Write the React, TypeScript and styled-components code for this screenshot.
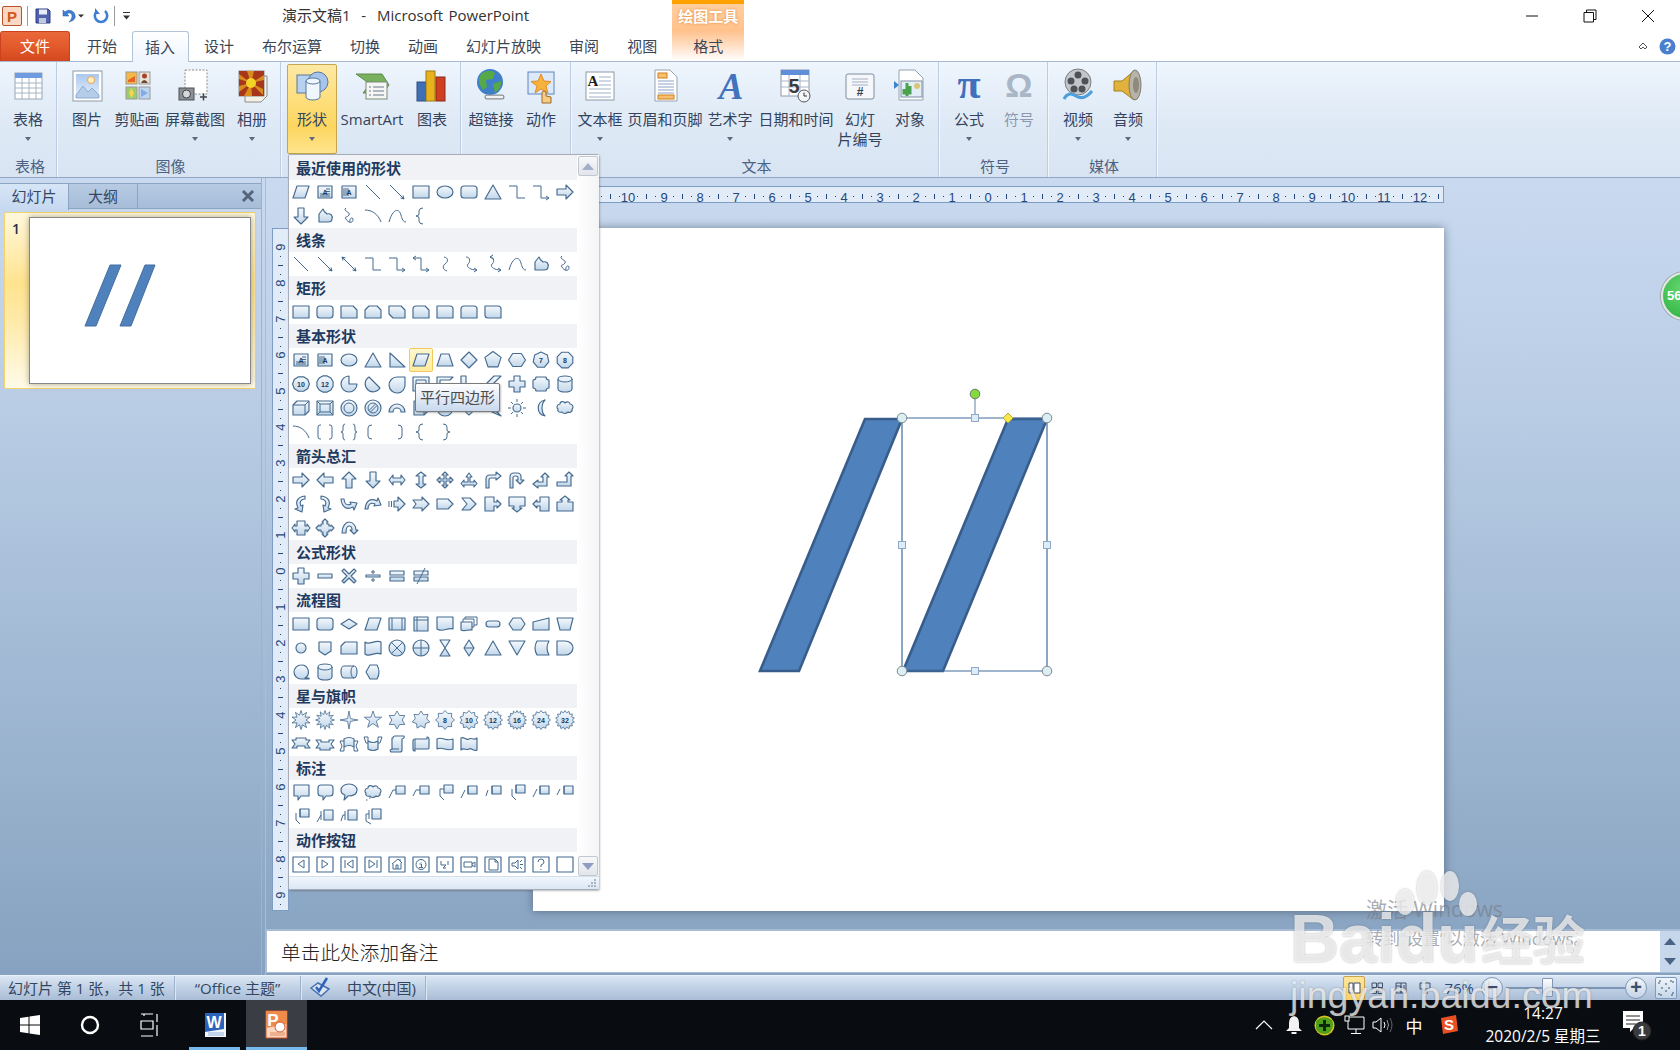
import React from 'react';
import styled, { createGlobalStyle } from 'styled-components';

const CJK = '"Open Sans", "Noto Sans CJK SC", "Liberation Sans", sans-serif';

const GlobalStyle = createGlobalStyle`
  html, body {
    margin: 0;
    padding: 0;
    overflow: hidden;
    background: #fff;
    font-family: ${CJK};
  }
  * { box-sizing: border-box; }
`;

const Screen = styled.div`
  position: relative;
  width: 1680px;
  height: 1050px;
  display: flex;
  flex-direction: column;
  overflow: hidden;
`;

/* ---------- title bar ---------- */

const TitleBar = styled.div`
  height: 31px;
  display: flex;
  align-items: center;
  background: #fff;
`;

const QuickAccess = styled.div`
  display: flex;
  align-items: center;
  width: 282px;
  padding-left: 2px;
`;

const QuickSep = styled.div`
  width: 1px;
  height: 20px;
  background: #9a9a9a;
  margin: 0 7px 0 5px;
`;

const QuickGap = styled.span<{ $w: number }>`
  width: ${p => p.$w}px;
`;

const Title = styled.div`
  font-size: 15px;
  line-height: 20px;
  margin-top: -1px;
  color: #333;
  white-space: pre;
  word-spacing: 1.5px;
  flex: 1;
`;

const WinButton = styled.div`
  width: 58px;
  display: flex;
  justify-content: center;
`;

const WinControls = styled.div`
  display: flex;
  margin-right: 3px;
`;

/* ---------- tabs ---------- */

const TabRow = styled.div`
  height: 30px;
  display: flex;
  align-items: stretch;
  background: #fff;
  position: relative;
`;

const FileTab = styled.div`
  width: 70px;
  margin-right: 3px;
  border: 1px solid #c9431c;
  border-bottom: 0;
  border-radius: 3px 3px 0 0;
  background: linear-gradient(#e9683a, #e35a2b 50%, #d3481f);
  color: #fff;
  font-size: 15px;
  padding-bottom: 2px;
  display: flex;
  align-items: center;
  justify-content: center;
`;

const Tab = styled.div<{ $active?: boolean }>`
  padding: 0 14px 2px;
  font-size: 15px;
  color: #3a4656;
  display: flex;
  align-items: center;
  position: relative;
  z-index: 1;
  ${p => p.$active && `
    border: 1px solid #b4c4d8;
    border-bottom: 0;
    border-radius: 3px 3px 0 0;
    margin: 0 1px;
    padding: 0 13px 2px 12px;
    margin-bottom: -1px;
    background: linear-gradient(#fff, #edf4fd);
  `}
`;

const ContextTab = styled(Tab)`
  position: relative;
  width: 72px;
  margin-left: 1px;
  justify-content: center;
  background: linear-gradient(#ffc28e, #ffdcc0 45%, #fff);
`;

const ContextHeader = styled.div`
  position: absolute;
  left: 0;
  right: 0;
  top: -31px;
  height: 31px;
  border-top: 4px solid #ffa200;
  background: linear-gradient(#ffcf9d, #ffc18c);
  color: #fff;
  font-size: 15px;
  font-weight: 600;
  text-align: center;
  line-height: 25px;
  text-shadow: 0 0 3px #e08a3c;
`;

const HelpArea = styled.div`
  margin-left: auto;
  display: flex;
  align-items: center;
  gap: 11px;
  padding-right: 4px;
`;

/* ---------- ribbon ---------- */

const Ribbon = styled.div`
  height: 117px;
  display: flex;
  border-top: 1px solid #a7b8cf;
  border-bottom: 1px solid #8fa6c4;
  background: linear-gradient(#eef5fd, #dfeaf6 50%, #d8e4f2);
`;

const Group = styled.div<{ $w: number; $pad: number }>`
  width: ${p => p.$w}px;
  padding-left: ${p => p.$pad}px;
  border-right: 1px solid #bccde2;
  box-shadow: 1px 0 0 #f2f7fc;
  display: flex;
  flex-direction: column;
`;

const GroupButtons = styled.div`
  height: 93px;
  padding-top: 2px;
  display: flex;
`;

const GroupLabel = styled.div<{ $pad: number }>`
  height: 22px;
  line-height: 22px;
  margin-left: -${p => p.$pad}px;
  padding-left: 4px;
  text-align: center;
  font-size: 15px;
  color: #4c6283;
`;

const RibbonButton = styled.div<{ $w: number; $active?: boolean; $disabled?: boolean }>`
  width: ${p => p.$w}px;
  height: 90px;
  display: flex;
  flex-direction: column;
  align-items: center;
  padding-top: 5px;
  font-size: 15px;
  color: ${p => (p.$disabled ? '#8b99ad' : '#33435c')};
  border-radius: 2px;
  ${p => p.$active && `
    border: 1px solid #c5a54f;
    padding-top: 4px;
    background: linear-gradient(#fde9a4, #fedd78 45%, #fdd65f 70%, #fee48d);
  `}
`;

const RibbonIcon = styled.div`
  width: 32px;
  height: 34px;
  flex: none;
  svg { overflow: visible; }
`;

const RibbonText = styled.div`
  margin-top: 6px;
  line-height: 20px;
  text-align: center;
  white-space: pre;
`;

const Caret = styled.div`
  width: 0;
  height: 0;
  margin-top: 8px;
  border-left: 3.5px solid transparent;
  border-right: 3.5px solid transparent;
  border-top: 4px solid #5e6a7c;
`;

/* ---------- workspace ---------- */

const Workspace = styled.div`
  flex: 1;
  display: flex;
  background: linear-gradient(#c9daf0, #b8cce4 30%, #86a2c0);
  min-height: 0;
`;

const LeftPane = styled.div`
  width: 262px;
  padding-top: 5px;
  border-right: 1px solid #9db2cd;
`;

const PaneTabs = styled.div`
  height: 26px;
  display: flex;
  background: linear-gradient(#b7cbe3, #a6bcd8);
  border-top: 1px solid #8ca5c4;
  border-bottom: 1px solid #8ca5c4;
  position: relative;
`;

const PaneTab = styled.div<{ $active?: boolean }>`
  width: 69px;
  text-align: center;
  line-height: 24px;
  font-size: 15px;
  color: #354763;
  border-right: 1px solid #8ca5c4;
  ${p => p.$active && `
    background: linear-gradient(#d6e5f6, #c6d9f0);
    height: 26px;
  `}
`;

const PaneClose = styled.div`
  position: absolute;
  right: 6px;
  top: 5px;
  display: flex;
`;

const SlideItem = styled.div`
  margin: 3px 0 0 4px;
  width: 252px;
  height: 177px;
  border: 1px solid #f4d36e;
  border-radius: 2px;
  background: linear-gradient(#fff8dc, #ffe38f 40%, #ffe9a6 60%, #fffbe9);
  display: flex;
  padding: 4px 0 0 24px;
  position: relative;
`;

const SlideNumber = styled.div`
  position: absolute;
  left: 7px;
  top: 6px;
  font-size: 14px;
  font-weight: 600;
  color: #20324e;
`;

const Thumb = styled.div`
  width: 222px;
  height: 167px;
  background: #fff;
  border: 1px solid #85888d;
  box-shadow: 0 0 6px rgba(90, 90, 60, 0.5);
`;

const Sash = styled.div`
  width: 4px;
  border-right: 1px solid #a9bdd6;
`;

const RightColumn = styled.div`
  flex: 1;
  display: flex;
  flex-direction: column;
  min-width: 0;
`;

const Stage = styled.div`
  height: 753px;
  display: grid;
  grid-template-columns: 17px 1fr;
  grid-template-rows: 17px 1fr;
  padding: 8px 0 0 6px;
  row-gap: 25px;
`;

const RulerCorner = styled.div``;

const HRuler = styled.div`
  width: 911px;
  height: 17px;
  margin-left: 244px;
  background: #e1ecf8;
  border: 1px solid #7f9cc2;
`;

const VRuler = styled.div`
  width: 17px;
  height: 683px;
  background: #e1ecf8;
  border: 1px solid #7f9cc2;
`;

const Slide = styled.div`
  width: 911px;
  height: 683px;
  margin-left: 244px;
  background: #fff;
  box-shadow: 0 0 9px rgba(50, 60, 80, 0.55);
`;

const Notes = styled.div`
  height: 44px;
  margin-bottom: 2px;
  border-top: 2px solid #a9bcd6;
  border-bottom: 1px solid #a9bcd6;
  border-left: 1px solid #a9bcd6;
  background: #fff;
  display: flex;
  align-items: center;
  justify-content: space-between;
`;

const NotesText = styled.div`
  font-size: 19.6px;
  font-weight: 300;
  color: #222;
  padding-left: 14px;
  letter-spacing: 0.1px;
`;

const NotesScroll = styled.div`
  width: 20px;
  height: 100%;
  background: #c6d7ec;
  display: flex;
  flex-direction: column;
  justify-content: space-around;
  align-items: center;
`;

const ArrowUp = styled.div<{ $c?: string }>`
  width: 0;
  height: 0;
  border-left: 6px solid transparent;
  border-right: 6px solid transparent;
  border-bottom: 7px solid ${p => p.$c || '#4a6284'};
`;

const ArrowDown = styled.div<{ $c?: string }>`
  width: 0;
  height: 0;
  border-left: 6px solid transparent;
  border-right: 6px solid transparent;
  border-top: 7px solid ${p => p.$c || '#4a6284'};
`;

/* ---------- status bar ---------- */

const StatusBar = styled.div`
  height: 25px;
  display: flex;
  align-items: stretch;
  background: linear-gradient(#dbe6f3, #c5d5e8 40%, #a9bdd6);
  border-top: 1px solid #e9f0f8;
  font-size: 15px;
  color: #34465f;
`;

const StatusItem = styled.div<{ $w: number; $center?: boolean }>`
  width: ${p => p.$w}px;
  display: flex;
  align-items: center;
  white-space: pre;
  padding-bottom: 2px;
  justify-content: ${p => (p.$center ? 'center' : 'flex-start')};
  padding-left: ${p => (p.$center ? 0 : 8)}px;
  border-right: 1px solid #9fb3cc;
  box-shadow: 1px 0 0 #dce7f3;
  gap: 16px;
`;

const StatusRight = styled.div`
  margin-left: auto;
  padding-right: 3px;
  display: flex;
  align-items: center;
`;

const ViewBtn = styled.div<{ $active?: boolean }>`
  width: ${p => (p.$active ? 22 : 24)}px;
  height: 25px;
  display: flex;
  align-items: center;
  justify-content: center;
  ${p => p.$active && `
    border: 1px solid #c9a24a;
    border-radius: 2px;
    background: linear-gradient(#fde79d, #fdd465);
  `}
`;

const ZoomLabel = styled.div`
  width: 37px;
  text-align: right;
  font-size: 15px;
  white-space: nowrap;
  color: #2b4a78;
`;

const ZoomCircle = styled.div<{ $ml: number }>`
  width: 22px;
  height: 22px;
  margin-left: ${p => p.$ml}px;
  border-radius: 50%;
  border: 1px solid #8197b5;
  background: linear-gradient(#f1f6fb, #c4d3e6);
  color: #3c4f6c;
  font: 700 20px/18px "Liberation Sans", sans-serif;
  text-align: center;
`;

const ZoomTrack = styled.div`
  width: 119px;
  margin-left: 3px;
  height: 2px;
  background: #7d95b5;
  position: relative;
`;

const ZoomThumb = styled.div`
  position: absolute;
  left: 36px;
  top: -9px;
  width: 11px;
  height: 19px;
  background: linear-gradient(#fafcfe, #cfdbe9);
  border: 1px solid #8197b5;
  border-radius: 1px;
`;

const FitBtn = styled.div`
  width: 22px;
  height: 22px;
  margin-left: 8px;
  border: 1px solid #7e9ac0;
  border-radius: 2px;
  background: linear-gradient(#eef4fa, #c6d6e9);
  display: flex;
  align-items: center;
  justify-content: center;
`;

/* ---------- taskbar ---------- */

const Taskbar = styled.div`
  height: 50px;
  background: #090c11;
  display: flex;
  align-items: stretch;
  color: #fff;
`;

const TaskIcon = styled.div`
  width: 60px;
  display: flex;
  align-items: center;
  justify-content: center;
`;

const TaskApp = styled.div<{ $active?: boolean; $first?: boolean }>`
  width: 61px;
  margin-left: ${p => (p.$first ? 5 : 0)}px;
  position: relative;
  display: flex;
  align-items: center;
  justify-content: center;
  background: ${p => (p.$active ? '#3a3d43' : 'transparent')};
  &::after {
    content: '';
    position: absolute;
    bottom: 0;
    height: 3px;
    left: ${p => (p.$active ? 0 : 4)}px;
    right: ${p => (p.$active ? 0 : 6)}px;
    background: #76b9ed;
  }
`;

const Tray = styled.div`
  margin-left: auto;
  display: flex;
  align-items: center;
  padding-right: 11px;
`;

const TrayItem = styled.div<{ $w: number }>`
  width: ${p => p.$w}px;
  display: flex;
  justify-content: center;
  align-items: center;
  font-size: 17px;
`;

const Clock = styled.div`
  width: 124px;
  margin-left: 16px;
  text-align: center;
  font-size: 15.5px;
  line-height: 23px;
  white-space: nowrap;
`;

/* ---------- shapes gallery ---------- */

const Gallery = styled.div`
  position: absolute;
  left: 288px;
  top: 154px;
  width: 311px;
  height: 736px;
  border: 1px solid #a6adb8;
  border-radius: 2px;
  background: #fff;
  box-shadow: 1px 1px 2px rgba(60, 60, 60, 0.35);
  display: grid;
  grid-template-columns: 288px 1fr;
  grid-template-rows: 721px 1fr;
`;

const GalleryList = styled.div`
  padding-top: 1px;
  background: #f0f2f5;
`;

const SectionTitle = styled.div`
  height: 24px;
  line-height: 25px;
  padding-left: 7px;
  background: #f0f2f5;
  color: #1f3a60;
  font-size: 15px;
  font-weight: 700;
`;

const ShapeGrid = styled.div`
  display: grid;
  grid-template-columns: repeat(12, 24px);
  grid-auto-rows: 24px;
  background: #fff;
`;

const ShapeCell = styled.div<{ $active?: boolean }>`
  width: 24px;
  height: 24px;
  display: flex;
  align-items: center;
  justify-content: center;
  ${p => p.$active && `
    border: 1px solid #f2c95e;
    border-radius: 2px;
    background: linear-gradient(#fff8cf, #ffeb9c);
  `}
`;

const GalleryScroll = styled.div`
  background: linear-gradient(90deg, #fff, #f3f4f6);
  padding: 1px 1px 0 1px;
  display: flex;
  flex-direction: column;
  justify-content: space-between;
`;

const ScrollBtn = styled.div`
  height: 20px;
  width: 20px;
  border: 1px solid #c2c8d0;
  border-radius: 2px;
  background: linear-gradient(#f7f8fa, #e2e5ea);
  display: flex;
  align-items: center;
  justify-content: center;
`;

const GalleryFooter = styled.div`
  grid-column: 1 / 3;
  background: linear-gradient(#f1f6fc, #dbe7f5);
  border-top: 1px solid #d6e0ec;
  display: flex;
  justify-content: flex-end;
  align-items: flex-end;
  padding: 0 2px 1px 0;
`;

const Tooltip = styled.div`
  position: absolute;
  left: 126px;
  top: 228px;
  width: 85px;
  height: 29px;
  border: 1px solid #7b7b7b;
  border-radius: 2px;
  background: linear-gradient(#fff, #c8d8ed);
  font-size: 15px;
  line-height: 26px;
  color: #4c4c4c;
  text-align: center;
  box-shadow: 1px 1px 2px rgba(0, 0, 0, 0.25);
`;

/* ---------- overlays ---------- */

const GreenBall = styled.div`
  position: absolute;
  left: 1661px;
  top: 272px;
  width: 48px;
  height: 48px;
  border-radius: 50%;
  border: 2px solid #e3e7e6;
  box-shadow: 0 0 0 1px #9aa5a5;
  background: radial-gradient(circle at 45% 35%, #67d66f, #36b84a 75%);
  color: #fff;
  font: 700 13px "Liberation Sans", sans-serif;
  line-height: 44px;
  padding-left: 4px;
`;

const ActivateText = styled.div`
  position: absolute;
  left: 1366px;
  top: 895px;
  color: rgba(120, 125, 135, 0.65);
  font-size: 21px;
  line-height: 29px;
  white-space: pre;
  pointer-events: none;
`;

const ActivateSub = styled.div`
  font-size: 17px;
`;

const Watermark = styled.div`
  position: absolute;
  left: 1290px;
  top: 870px;
  width: 300px;
  pointer-events: none;
  color: rgba(255, 255, 255, 0.72);
  text-shadow: 0 0 2px rgba(70, 70, 70, 0.45);
`;

const BaiduLine = styled.div`
  margin-top: 31px;
  height: 74px;
  display: flex;
  align-items: center;
  font: 700 68px/74px "Liberation Sans", sans-serif;
  white-space: nowrap;
`;

const BaiduCjk = styled.span`
  font: 700 52px/74px "Noto Sans CJK SC", sans-serif;
  margin-left: 2px;
`;

const Paw = styled.svg`
  position: absolute;
  left: 100px;
  top: 0;
  overflow: visible;
  filter: drop-shadow(0 0 1px rgba(70, 70, 70, 0.5));
`;

const JingyanLine = styled.div`
  font: 400 37.6px/40px "Liberation Sans", sans-serif;
  white-space: nowrap;
`;

/* ---------- gallery icon data ---------- */

const polygon = (n: number, rx: number, ry = rx, rot = -Math.PI / 2) => {
  let d = '';
  for (let i = 0; i < n; i++) {
    const a = rot + (i * 2 * Math.PI) / n;
    d += `${i ? 'L' : 'M'}${(10 + rx * Math.cos(a)).toFixed(1)} ${(10 + ry * Math.sin(a)).toFixed(1)}`;
  }
  return d + 'Z';
};

const star = (n: number, r1: number, r2: number) => {
  let d = '';
  for (let i = 0; i < n * 2; i++) {
    const a = -Math.PI / 2 + (i * Math.PI) / n;
    const r = i % 2 ? r2 : r1;
    d += `${i ? 'L' : 'M'}${(10 + r * Math.cos(a)).toFixed(1)} ${(10 + r * Math.sin(a)).toFixed(1)}`;
  }
  return d + 'Z';
};

const CIRCLE = 'M2 10A8 8 0 1 1 18 10A8 8 0 1 1 2 10Z';
const BTN = 'M2 3H18V18H2Z';
const CLOUD = 'M5 6C5 3 9 3 10 5C12 3 15 4 15 6C18 6 19 10 17 11C18 14 14 15 13 14C11 16 8 16 7 14C4 15 2 13 3 11C1 10 2 6 5 6Z';
const ELBOW = 'M2 4H10V16H18';
const HEAD = 'M18 16L15 14M18 16L15 18';
const TAIL = 'M2 4L5 2M2 4L5 6';
const CURVE = 'M7 3C12 3 11 9 9 10C7 12 10 16 18 16';

// first part is filled, parts after a | are plain strokes
const SHAPES: Record<string, string> = {
  para: 'M6 4H18L14 16H2Z',
  textbox: 'M3 4H17V16H3Z|M11 7H15M11 9.5H15M5 12H15M5 14H15',
  vtextbox: 'M3 4H17V16H3Z|M5 6V14M7 6V14M9 6V14',
  line: '|M3 3L17 17',
  arrow: '|M3 3L17 17M17 17L13.5 16M17 17L16 13.5',
  dbl: '|M3 3L17 17M17 17L13.5 16M17 17L16 13.5M3 3L6.5 4M3 3L4 6.5',
  elbow: '|' + ELBOW,
  elbowA: '|' + ELBOW + HEAD,
  elbowD: '|' + ELBOW + HEAD + TAIL,
  curveC: '|M9 3C14 4 13 8 10 10C7 12 8 16 12 17',
  curveA: '|' + CURVE + HEAD,
  curveD: '|' + CURVE + HEAD + 'M7 3L10 1M7 3L10 5',
  curve: '|M2 16C6 2 12 2 14 9C15 13 16 16 19 16',
  blob: 'M4 8L8 3C9 6 11 7 12 8C16 7 18 10 17 13C17 15 15 16 13 16H4Z',
  scribble: '|M7 2C3 5 12 6 10 9C8 12 5 10 7 13C9 17 14 18 14 13C14 11 10 12 11 16',
  arc: '|M2 4C9 4 15 8 18 16',
  rect: 'M2 4H18V16H2Z',
  round: 'M5 4H15Q18 4 18 7V13Q18 16 15 16H5Q2 16 2 13V7Q2 4 5 4Z',
  snip1: 'M2 4H14L18 8V16H2Z',
  snip2: 'M6 4H14L18 8V16H2V8Z',
  snipD: 'M2 4H14L18 8V16H6L2 12Z',
  snipR: 'M5 4H14L18 8V16H2V7Q2 4 5 4Z',
  round1: 'M2 4H15Q18 4 18 7V16H2Z',
  round2: 'M5 4H15Q18 4 18 7V16H2V7Q2 4 5 4Z',
  roundD: 'M2 4H15Q18 4 18 7V16H5Q2 16 2 13Z',
  oval: 'M2 10A8 6 0 1 1 18 10A8 6 0 1 1 2 10Z',
  tri: 'M10 3L18 17H2Z',
  rtTri: 'M3 3L18 17H3Z',
  trap: 'M6 4H14L18 16H2Z',
  diamond: 'M10 2L18 10L10 18L2 10Z',
  pent: polygon(5, 8.5),
  hex: polygon(6, 8.5, 7.5, 0),
  hept: polygon(7, 8),
  oct: polygon(8, 8.4, 8.4, Math.PI / 8),
  dec: polygon(10, 8.4, 7.6, 0),
  dodec: polygon(12, 8.4, 8.4, Math.PI / 12),
  pie: 'M10 2A8 8 0 1 0 18 10H10Z',
  chord: 'M6 3A8 8 0 1 0 17 14Z',
  tear: 'M18 3V10A8 8 0 1 1 10 3Z',
  frame: 'M2 3H18V17H2Z|M5 6H15V14H5Z',
  half: 'M2 3H18L15 6H5V14L2 17Z',
  lshape: 'M2 2H7V13H18V18H2Z',
  stripe: 'M11 2H18L2 18V11Z',
  plus: 'M7 2H13V7H18V13H13V18H7V13H2V7H7Z',
  plaque: 'M5 3H15Q15 6 18 6V14Q15 14 15 17H5Q5 14 2 14V6Q5 6 5 3Z',
  can: 'M3 5A7 3 0 0 1 17 5V15A7 3 0 0 1 3 15Z|M3 5A7 3 0 0 0 17 5',
  cube: 'M2 7L6 3H18V13L14 17H2Z|M2 7H14V17M14 7L18 3',
  bevel: 'M2 3H18V17H2Z|M5 6H15V14H5ZM2 3L5 6M18 3L15 6M2 17L5 14M18 17L15 14',
  donut: CIRCLE + '|M5 10A5 5 0 1 1 15 10A5 5 0 1 1 5 10Z',
  nosym: CIRCLE + '|M5 10A5 5 0 1 1 15 10A5 5 0 1 1 5 10ZM6 12.5L12.5 6M7.5 14L14 7.5',
  blockArc: 'M2 14A8 8 0 0 1 18 14H14A4 4 0 0 0 6 14Z',
  folded: 'M3 3H17V13L13 17H3Z|M13 17V13H17',
  smiley: CIRCLE,
  heart: 'M10 17C2 11 2 4 6 4C8 4 10 6 10 7C10 6 12 4 14 4C18 4 18 11 10 17Z',
  bolt: 'M8 2L13 8L11 9L16 13L14 14L18 18L9 14L11 13L4 9L7 8L3 5Z',
  sun: 'M6 10A4 4 0 1 1 14 10A4 4 0 1 1 6 10Z|M10 1V4M10 16V19M1 10H4M16 10H19M4 4L6 6M14 14L16 16M16 4L14 6M4 16L6 14',
  moon: 'M14 2C5 4 5 16 14 18C10 14 10 6 14 2Z',
  cloud: CLOUD,
  brackets: '|M6 3H5Q3 3 3 5V15Q3 17 5 17H6M14 3H15Q17 3 17 5V15Q17 17 15 17H14',
  braces: '|M6 2Q4 2 4 5V8Q4 10 2 10Q4 10 4 12V15Q4 18 6 18M14 2Q16 2 16 5V8Q16 10 18 10Q16 10 16 12V15Q16 18 14 18',
  lbr: '|M9 3Q5 3 5 6V14Q5 17 9 17',
  rbr: '|M11 3Q15 3 15 6V14Q15 17 11 17',
  lbrace: '|M12 2Q8 2 8 5V8Q8 10 5 10Q8 10 8 12V15Q8 18 12 18',
  rbrace: '|M8 2Q12 2 12 5V8Q12 10 15 10Q12 10 12 12V15Q12 18 8 18',
  right: 'M2 7H11V3L18 10L11 17V13H2Z',
  left: 'M18 7H9V3L2 10L9 17V13H18Z',
  up: 'M7 18V9H3L10 2L17 9H13V18Z',
  down: 'M7 2V11H3L10 18L17 11H13V2Z',
  lr: 'M2 10L6 5V8H14V5L18 10L14 15V12H6V15Z',
  ud: 'M10 2L15 6H12V14H15L10 18L5 14H8V6H5Z',
  quad: 'M10 2L13 5H11V9H15V7L18 10L15 13V11H11V15H13L10 18L7 15H9V11H5V13L2 10L5 7V9H9V5H7Z',
  lru: 'M10 3L13 7H11V12H15V10L18 13.5L15 17V15H5V17L2 13.5L5 10V12H9V7H7Z',
  bent: 'M3 18V9Q3 5 7 5H13V2L18 6L13 10V8H8Q6 8 6 10V18Z',
  uturn: 'M3 18V7Q3 3 7 3H10Q14 3 14 7V10H17L13 14L9 10H11V7Q11 6 9 6H8Q6 6 6 8V18Z',
  leftUp: 'M14 3L18 7H16V16H7V18L2 14L7 10V12H12V7H10Z',
  bentUp: 'M2 12H12V6H10L14 2L18 6H16V16H2Z',
  curvR: 'M14 2C6 3 4 8 7 14L4 15L11 18L12 11L10 12C8 8 10 5 14 5Z',
  curvL: 'M6 2C14 3 16 8 13 14L16 15L9 18L8 11L10 12C12 8 10 5 6 5Z',
  curvU: 'M2 5C3 14 8 16 14 13L15 16L18 9L11 8L12 10C8 12 5 10 5 5Z',
  curvD: 'M2 15C3 6 8 4 14 7L15 4L18 11L11 12L12 10C8 8 5 10 5 15Z',
  striped: 'M7 7H11V3L18 10L11 17V13H7Z|M2 7V13M4.5 7V13',
  notched: 'M2 6H11V3L18 10L11 17V14H2L5 10Z',
  home: 'M2 5H13L18 10L13 15H2Z',
  chevron: 'M3 4H11L17 10L11 16H3L8 10Z',
  rCall: 'M2 3H11V8H14V6L18 10L14 14V12H11V17H2Z',
  dCall: 'M2 3H18V12H13V14H15L10 18L5 14H7V12H2Z',
  lCall: 'M18 3H9V8H6V6L2 10L6 14V12H9V17H18Z',
  uCall: 'M2 17H18V8H13V6H15L10 2L5 6H7V8H2Z',
  lrCall: 'M6 3H14V8H16V6L19 10L16 14V12H14V17H6V12H4V14L1 10L4 6V8H6Z',
  qCall: 'M10 1L13 4H12V6H14V8H16V7L19 10L16 13V12H14V14H12V16H13L10 19L7 16H8V14H6V12H4V13L1 10L4 7V8H6V6H8V4H7Z',
  circ: 'M3 15C3 8 7 4 10 4C14 4 17 8 17 12H19L15 16L11 12H13C13 9 12 8 10 8C8 8 7 10 7 15Z',
  minus: 'M3 8H17V12H3Z',
  times: 'M5 3L10 8L15 3L17 5L12 10L17 15L15 17L10 12L5 17L3 15L8 10L3 5Z',
  divide: 'M3 9H17V11H3Z|M9 5H11V7H9ZM9 13H11V15H9Z',
  equal: 'M3 5H17V9H3ZM3 11H17V15H3Z',
  nequal: 'M3 5H17V9H3ZM3 11H17V15H3Z|M6 18L14 2',
  decision: 'M2 10L10 5L18 10L10 15Z',
  predef: 'M2 4H18V16H2Z|M5 4V16M15 4V16',
  internal: 'M3 3H17V17H3Z|M6 3V17M3 6H17',
  doc: 'M2 3H18V15C13 13 7 19 2 15Z',
  multidoc: 'M2 8H13V16C9 15 6 18 2 16Z|M4 8V5H15V13H13M6 5V3H18V11H15',
  term: 'M6 7H14A3 3 0 0 1 14 13H6A3 3 0 0 1 6 7Z',
  prep: 'M6 4H14L18 10L14 16H6L2 10Z',
  manin: 'M2 8L18 4V16H2Z',
  manop: 'M2 4H18L15 16H5Z',
  conn: 'M5 10A5 5 0 1 1 15 10A5 5 0 1 1 5 10Z',
  offpage: 'M4 4H16V13L10 17L4 13Z',
  card: 'M6 4H18V16H2V8Z',
  tape: 'M2 4C6 8 12 1 18 4V16C12 13 6 20 2 16Z',
  summing: CIRCLE + '|M4 4L16 16M16 4L4 16',
  or: CIRCLE + '|M2 10H18M10 2V18',
  collate: 'M5 2H15L5 18H15Z',
  sort: 'M10 2L15 10L10 18L5 10Z|M5 10H15',
  merge: 'M2 3H18L10 17Z',
  stored: 'M6 3H18Q14 10 18 17H6Q2 10 6 3Z',
  delay: 'M2 3H10A8 7 0 0 1 10 17H2Z',
  seq: 'M10 3A7 7 0 1 0 10 17H18V16H14A7 7 0 0 0 10 3Z',
  direct: 'M5 4H15A3 6 0 0 1 15 16H5A3 6 0 0 1 5 4Z|M15 4A3 6 0 0 0 15 16',
  display: 'M7 3H14Q18 10 14 17H7L3 10Z',
  burst1: star(10, 9.5, 5),
  burst2: star(12, 9.5, 5.5),
  star4: star(4, 9, 2),
  star5: star(5, 9, 3.5),
  star6: star(6, 9, 5.2),
  star7: star(7, 9, 5.8),
  star8: star(8, 9.5, 7),
  star10: star(10, 9.5, 7.2),
  star12: star(12, 9.5, 7.2),
  star16: star(16, 9.5, 7.2),
  star24: star(12, 9.5, 7.4),
  star32: star(14, 9.5, 7.4),
  ribDown: 'M1 6H5V4H15V6H19L16 10L19 14H14V12H6V14H1L4 10Z',
  ribUp: 'M1 14H5V16H15V14H19L16 10L19 6H14V8H6V6H1L4 10Z',
  crvDown: 'M5 5Q10 2 15 5V13Q10 10 5 13Z|M5 7H1L3 12L1 17H5V13M15 7H19L17 12L19 17H15V13',
  crvUp: 'M5 7Q10 10 15 7V15Q10 18 5 15Z|M5 9H3L1 3H5V7M15 9H17L19 3H15V7',
  vscroll: 'M6 4Q6 2 8 2H17Q18 4 15 5V16Q15 18 13 18H4Q2 16 5 15V4Z|M5 15H12',
  hscroll: 'M2 7Q2 5 4 5H16V3Q18 3 18 5V14Q18 15 16 15H4V17Q2 17 2 15Z|M4 5V15',
  wave: 'M2 5C7 2 11 8 18 5V15C12 18 7 12 2 15Z',
  dwave: 'M2 4C5 2 7 7 10 5C12 3 15 7 18 4V16C15 18 12 13 10 15C7 17 5 13 2 16Z',
  cRect: 'M3 3H18V14H10L7 18V14H3Z',
  cRound: 'M6 3H15Q18 3 18 6V11Q18 14 15 14H11L8 18V14H6Q3 14 3 11V6Q3 3 6 3Z',
  cOval: 'M10 2C15 2 18 5 18 8C18 12 14 14 9 14L5 18L6 13C3 12 2 10 2 8C2 5 5 2 10 2Z',
  cCloud: CLOUD + '|M6 16H7.5M3 18H4.5',
  c1: 'M9 4H18V12H9Z|M9 8H6L2 16',
  c2: 'M9 4H18V12H9Z|M9 8H5L2 14',
  c3: 'M9 3H18V11H9Z|M9 7H5V14L9 18',
  d1: 'M9 4H18V12H9Z|M9 4V12M6 8L2 16',
  d2: 'M9 4H18V12H9Z|M9 4V12M5 8L3 14',
  d3: 'M9 3H18V11H9Z|M9 3V11M5 7V14L9 18',
  e1: 'M9 4H18V12H9Z|M9 4V12M6 7L2 15',
  e2: 'M9 4H18V12H9Z|M9 4V12M5 7L2 13',
  b1: 'M9 4H18V14H9Z|M6 5V14M6 9L2 16',
  b2: 'M9 4H18V14H9Z|M6 5V14M6 9H4L2 15',
  b3: 'M9 3H18V13H9Z|M6 4V13M6 8H3V15L8 18',
  aBack: BTN + '|M13 6V14L7 10Z',
  aFwd: BTN + '|M7 6V14L13 10Z',
  aBegin: BTN + '|M6 6V14M14 6V14L8 10Z',
  aEnd: BTN + '|M14 6V14M6 6V14L12 10Z',
  aHome: BTN + '|M5 10L11 5L15 9M6 10V15H14V9M9 15V11H11V15M13 5V7',
  aInfo: BTN + '|M5 10.5A5 5 0 1 1 15 10.5A5 5 0 1 1 5 10.5ZM10 8V8.5M8.5 10H10.5V13M8 13.5H12',
  aRet: BTN + '|M6 7V11H11L8 14M13 7V11M8 14H11',
  aMovie: BTN + '|M5 8H13V13H5ZM13 10L16 8V13L13 11',
  aDoc: BTN + '|M6 5H12L15 8V16H6ZM12 5V8H15',
  aSound: BTN + '|M5 9H8L11 6V15L8 12H5ZM13 8L15 6M13 10.5H16M13 13L15 15',
  aHelp: BTN + '|M7 8Q7 5 10 5Q13 5 13 8Q13 10 10 11V13M10 15V16',
  aBlank: BTN,
};

const SHAPE_TEXT: Record<string, string> = {
  textbox: 'A', vtextbox: 'A', hept: '7', oct: '8', dec: '10', dodec: '12',
  star8: '8', star10: '10', star12: '12', star16: '16', star24: '24', star32: '32',
};

const SECTIONS: { title: string; shapes: string[] }[] = [
  { title: '最近使用的形状', shapes: ['para', 'textbox', 'vtextbox', 'line', 'arrow', 'rect', 'oval', 'round', 'tri', 'elbow', 'elbowA', 'right', 'down', 'blob', 'scribble', 'arc', 'curve', 'lbrace'] },
  { title: '线条', shapes: ['line', 'arrow', 'dbl', 'elbow', 'elbowA', 'elbowD', 'curveC', 'curveA', 'curveD', 'curve', 'blob', 'scribble'] },
  { title: '矩形', shapes: ['rect', 'round', 'snip1', 'snip2', 'snipD', 'snipR', 'round1', 'round2', 'roundD'] },
  { title: '基本形状', shapes: ['textbox', 'vtextbox', 'oval', 'tri', 'rtTri', 'para', 'trap', 'diamond', 'pent', 'hex', 'hept', 'oct', 'dec', 'dodec', 'pie', 'chord', 'tear', 'frame', 'half', 'lshape', 'stripe', 'plus', 'plaque', 'can', 'cube', 'bevel', 'donut', 'nosym', 'blockArc', 'folded', 'smiley', 'heart', 'bolt', 'sun', 'moon', 'cloud', 'arc', 'brackets', 'braces', 'lbr', 'rbr', 'lbrace', 'rbrace'] },
  { title: '箭头总汇', shapes: ['right', 'left', 'up', 'down', 'lr', 'ud', 'quad', 'lru', 'bent', 'uturn', 'leftUp', 'bentUp', 'curvR', 'curvL', 'curvU', 'curvD', 'striped', 'notched', 'home', 'chevron', 'rCall', 'dCall', 'lCall', 'uCall', 'lrCall', 'qCall', 'circ'] },
  { title: '公式形状', shapes: ['plus', 'minus', 'times', 'divide', 'equal', 'nequal'] },
  { title: '流程图', shapes: ['rect', 'round', 'decision', 'para', 'predef', 'internal', 'doc', 'multidoc', 'term', 'prep', 'manin', 'manop', 'conn', 'offpage', 'card', 'tape', 'summing', 'or', 'collate', 'sort', 'tri', 'merge', 'stored', 'delay', 'seq', 'can', 'direct', 'display'] },
  { title: '星与旗帜', shapes: ['burst1', 'burst2', 'star4', 'star5', 'star6', 'star7', 'star8', 'star10', 'star12', 'star16', 'star24', 'star32', 'ribDown', 'ribUp', 'crvDown', 'crvUp', 'vscroll', 'hscroll', 'wave', 'dwave'] },
  { title: '标注', shapes: ['cRect', 'cRound', 'cOval', 'cCloud', 'c1', 'c2', 'c3', 'd1', 'd2', 'd3', 'e1', 'e2', 'd3', 'b1', 'b2', 'b3'] },
  { title: '动作按钮', shapes: ['aBack', 'aFwd', 'aBegin', 'aEnd', 'aHome', 'aInfo', 'aRet', 'aMovie', 'aDoc', 'aSound', 'aHelp', 'aBlank'] },
];

const ShapeIcon = ({ name }: { name: string }) => {
  const [fill, ...strokes] = SHAPES[name].split('|');
  const isAction = /^a[A-Z]/.test(name);
  const isStar = name.startsWith('star') || name.startsWith('burst');
  return (
    <svg width="20" height="20" viewBox="0 0 20 20">
      {fill && <path d={fill} fill={isAction ? '#fff' : 'url(#shapeFill)'} stroke="#446a8f" strokeWidth={isStar ? 0.8 : 1.15} strokeLinejoin="round" />}
      {strokes.map(d => <path key={d} d={d} fill="none" stroke="#446a8f" strokeWidth="1" />)}
      {SHAPE_TEXT[name] && (
        <text x="10" y="12.6" textAnchor="middle" fontSize="7" fontWeight="700" fontFamily="Liberation Sans" fill="#23395a">{SHAPE_TEXT[name]}</text>
      )}
    </svg>
  );
};

/* ---------- ribbon icons ---------- */

const RIBBON_ICONS: Record<string, React.ReactNode> = {
  table: (
    <>
      <rect x="3" y="4" width="27" height="26" fill="#fff" stroke="#9aa6b5" />
      <rect x="3" y="4" width="27" height="5" fill="#6f9be0" />
      <path d="M3 14H30M3 19H30M3 24H30M10 9V30M17 9V30M24 9V30" stroke="#a8b4c4" />
    </>
  ),
  picture: (
    <>
      <defs>
        <linearGradient id="sky" x1="0" y1="0" x2="0" y2="1"><stop offset="0" stopColor="#a9c8ee" /><stop offset="1" stopColor="#e9f1fb" /></linearGradient>
      </defs>
      <rect x="2" y="2" width="29" height="30" fill="#fff" stroke="#8e9aa8" />
      <rect x="5" y="5" width="23" height="24" fill="url(#sky)" />
      <circle cx="20" cy="11" r="3.5" fill="#fff2c0" stroke="#f1a24b" />
      <path d="M5 26L12 17L17 23L21 19L28 26V29H5Z" fill="#b5cdea" stroke="#8fabd0" />
    </>
  ),
  clipart: (
    <>
      <rect x="5" y="3" width="11" height="12" fill="#f4b942" stroke="#9a9a9a" />
      <path d="M7 11L14 7V13H7Z" fill="#e5622a" />
      <rect x="18" y="3" width="11" height="12" fill="#e8e3d8" stroke="#9a9a9a" />
      <circle cx="23.5" cy="7" r="2.5" fill="#a8432a" />
      <path d="M20 14Q23 8 27 14Z" fill="#72462f" />
      <rect x="5" y="18" width="11" height="12" fill="#9ecb6c" stroke="#9a9a9a" />
      <path d="M10.5 19L13 24L10.5 29L8 24Z" fill="#f4d64e" />
      <rect x="18" y="18" width="11" height="12" fill="#bcd5f1" stroke="#9a9a9a" />
      <path d="M20 20L27 24L20 28Z" fill="#83abe0" />
    </>
  ),
  screenshot: (
    <>
      <rect x="6" y="1" width="22" height="24" fill="#fff" stroke="#8d8d8d" strokeDasharray="2 1.5" />
      <rect x="0" y="19" width="15" height="12" fill="#8b9096" stroke="#4d5156" />
      <circle cx="7.5" cy="25" r="4" fill="#d6d9dc" stroke="#3f4347" />
      <path d="M21 28H28M24.5 24.5V31.5" stroke="#444" strokeWidth="1.5" />
    </>
  ),
  album: (
    <>
      <path d="M9 7H31V27L25 33H9Z" fill="#f4f1e7" stroke="#908d84" />
      <rect x="3" y="2" width="25" height="25" fill="#7e2c10" stroke="#8d8d8d" />
      <path d="M3 2H28V27H3Z" fill="#a7361b" />
      <path d="M15 14L3 5V10ZM15 14L11 2H18ZM15 14L28 6V11ZM15 14L27 20V26ZM15 14L8 27H16ZM15 14L3 17V23Z" fill="#d98c1e" />
      <circle cx="15" cy="14" r="5" fill="#f3d226" />
    </>
  ),
  shape: (
    <>
      <rect x="1" y="6" width="18" height="18" fill="#b7d1f0" stroke="#56789f" />
      <circle cx="22" cy="13" r="10" fill="#a7c4ea" stroke="#56789f" />
      <path d="M10 12A7 3 0 0 1 24 12V28A7 3 0 0 1 10 28Z" fill="#f0f6fd" stroke="#56789f" />
      <path d="M10 12A7 3 0 0 0 24 12" fill="none" stroke="#56789f" />
    </>
  ),
  smartart: (
    <>
      <path d="M0 5H26L33 16L27 24H7L14 15Z" fill="#78b05e" stroke="#5e8c4a" />
      <rect x="10" y="13" width="21" height="17" fill="#f6f7f5" stroke="#7c8a7d" />
      <path d="M13 18H15M17 18H28M13 22H15M17 22H28M13 26H15M17 26H28" stroke="#66788c" />
    </>
  ),
  chart: (
    <>
      <rect x="1" y="13" width="9" height="19" fill="#3f6fb5" stroke="#2f4f80" />
      <rect x="10" y="2" width="9" height="30" fill="#e8b21f" stroke="#9a7a12" />
      <rect x="20" y="8" width="9" height="24" fill="#cf3f22" stroke="#8c2a16" />
    </>
  ),
  link: (
    <>
      <circle cx="15" cy="13" r="13" fill="#3f7ec9" />
      <path d="M6 5Q14 -1 20 4L18 10L11 11L12 18L8 21Q1 12 6 5ZM18 15L26 12Q27 19 20 24Z" fill="#57a947" />
      <path d="M12 28H27" stroke="#8a8f95" strokeWidth="5" strokeLinecap="round" fill="none" />
      <path d="M12 28H27" stroke="#f0f2f4" strokeWidth="2.5" strokeLinecap="round" fill="none" />
    </>
  ),
  action: (
    <>
      <rect x="3" y="3" width="26" height="22" fill="#dce9f8" stroke="#5f86bd" />
      <path d="M16 5L19 12L26 12.5L21 17L23 24L16 20L10 24L12 17L6 12.5L13 12Z" fill="#f6b23c" stroke="#e28c23" />
      <path d="M3 3h.01M16 3h.01M29 3h.01M3 25h.01M29 25h.01" stroke="#2f6fd0" strokeWidth="3.5" />
      <path d="M17 34V24Q17 22 19 22Q21 22 21 24V27L26 28V34Z" fill="#f4cc84" stroke="#a0682c" />
    </>
  ),
  textframe: (
    <>
      <rect x="2" y="3" width="28" height="28" fill="#fff" stroke="#8e9aa8" />
      <path d="M15 8H27M15 12H27M15 16H27M5 20H27M5 24H27M5 28H27" stroke="#9fb0c8" />
      <text x="9" y="17" textAnchor="middle" fontSize="15" fontWeight="700" fontFamily="Liberation Serif" fill="#1c1c1c">A</text>
    </>
  ),
  header: (
    <>
      <path d="M6 1H21L28 8V32H6Z" fill="#fff" stroke="#97a2b0" />
      <rect x="9" y="4" width="9" height="5" fill="#f6c16f" stroke="#cf7f18" />
      <path d="M9 12H25M9 15H25M9 18H25M9 21H25M9 24H25" stroke="#8ba3c7" />
      <rect x="9" y="26" width="16" height="4" fill="#f6c16f" stroke="#cf7f18" />
    </>
  ),
  wordart: (
    <text x="17" y="30" textAnchor="middle" fontSize="37" fontStyle="italic" fontWeight="700" fontFamily="Liberation Serif" fill="#4373bd">A</text>
  ),
  datetime: (
    <>
      <rect x="1" y="1" width="28" height="26" fill="#fff" stroke="#8e9aa8" />
      <rect x="1" y="1" width="28" height="5" fill="#5f8fd8" />
      <path d="M1 12H29M1 18H29M9 6V27M20 6V27" stroke="#aab5c4" />
      <text x="14" y="24" textAnchor="middle" fontSize="20" fontWeight="700" fontFamily="Liberation Sans" fill="#3a3a3a">5</text>
      <circle cx="24" cy="27" r="6" fill="#f4f6f8" stroke="#555" />
      <path d="M24 23.5V27H27" stroke="#333" fill="none" />
    </>
  ),
  slidenum: (
    <>
      <rect x="2" y="5" width="28" height="25" rx="2" fill="#f5f7fa" stroke="#7f8da0" />
      <path d="M8 10H24M8 13H24M8 16H24" stroke="#a4b1c4" />
      <text x="16" y="27" textAnchor="middle" fontSize="12" fontWeight="700" fontFamily="Liberation Sans" fill="#345">#</text>
    </>
  ),
  object: (
    <>
      <path d="M5 1H21L29 9V31H5Z" fill="#fff" stroke="#97a2b0" />
      <rect x="7" y="12" width="21" height="16" fill="#e4eef8" stroke="#7d8da2" />
      <path d="M13 27V14M10 20V24H16V17" stroke="#4aa14e" strokeWidth="3" fill="none" />
      <circle cx="23" cy="17" r="3" fill="#d9c678" />
      <path d="M0 12L5 16L0 20Z" fill="#3d83d1" />
    </>
  ),
  pi: <text x="16" y="29" textAnchor="middle" fontSize="42" fontWeight="700" fontFamily="Liberation Serif" fill="#4070bb">π</text>,
  omega: <text x="16" y="28" textAnchor="middle" fontSize="34" fontWeight="700" fontFamily="Liberation Sans" fill="#aab6c6">Ω</text>,
  video: (
    <>
      <circle cx="16" cy="13" r="13" fill="#c3c6ca" stroke="#7a7d82" />
      <circle cx="16" cy="6" r="3.5" fill="#4e5257" />
      <circle cx="9" cy="12" r="3.5" fill="#4e5257" />
      <circle cx="23" cy="12" r="3.5" fill="#4e5257" />
      <circle cx="12" cy="20" r="3.5" fill="#4e5257" />
      <circle cx="20" cy="20" r="3.5" fill="#4e5257" />
      <path d="M2 30Q6 22 14 27T30 22" stroke="#4c9fdc" strokeWidth="3" fill="none" />
    </>
  ),
  audio: (
    <>
      <path d="M2 12H10L22 2V31L10 22H2Z" fill="#e3b23c" stroke="#a0821f" />
      <ellipse cx="23" cy="16" rx="6" ry="15" fill="#b7b3a7" stroke="#7d7a70" />
      <ellipse cx="24" cy="16" rx="3" ry="8" fill="#8e8a7e" />
    </>
  ),
};

const RIBBON_GROUPS = [
  { w: 57, pad: 4, label: '表格', items: [{ w: 48, icon: 'table', text: '表格', caret: true }] },
  {
    w: 224, pad: 5, label: '图像', items: [
      { w: 50, icon: 'picture', text: '图片' },
      { w: 50, icon: 'clipart', text: '剪贴画' },
      { w: 66, icon: 'screenshot', text: '屏幕截图', caret: true },
      { w: 48, icon: 'album', text: '相册', caret: true },
    ],
  },
  {
    w: 180, pad: 6, label: '', items: [
      { w: 50, icon: 'shape', text: '形状', caret: true, active: true },
      { w: 70, icon: 'smartart', text: 'SmartArt' },
      { w: 50, icon: 'chart', text: '图表' },
    ],
  },
  {
    w: 110, pad: 5, label: '', items: [
      { w: 50, icon: 'link', text: '超链接' },
      { w: 50, icon: 'action', text: '动作' },
    ],
  },
  {
    w: 368, pad: 1, label: '文本', items: [
      { w: 56, icon: 'textframe', text: '文本框', caret: true },
      { w: 74, icon: 'header', text: '页眉和页脚' },
      { w: 56, icon: 'wordart', text: '艺术字', caret: true },
      { w: 76, icon: 'datetime', text: '日期和时间' },
      { w: 52, icon: 'slidenum', text: '幻灯\n片编号' },
      { w: 48, icon: 'object', text: '对象' },
    ],
  },
  {
    w: 109, pad: 5, label: '符号', items: [
      { w: 50, icon: 'pi', text: '公式', caret: true },
      { w: 50, icon: 'omega', text: '符号', disabled: true },
    ],
  },
  {
    w: 109, pad: 5, label: '媒体', items: [
      { w: 50, icon: 'video', text: '视频', caret: true },
      { w: 50, icon: 'audio', text: '音频', caret: true },
    ],
  },
];

/* ---------- rulers ---------- */

const rulerLabels = (n: number) => String(Math.abs(n));

const HorizontalTicks = () => {
  const marks = [];
  for (let n = -12; n <= 12; n++) {
    const x = 454 + n * 36;
    marks.push(
      <text key={`n${n}`} x={x} y="12.5" textAnchor="middle" fontSize="13" fontFamily="Liberation Sans" fill="#27477a">{rulerLabels(n)}</text>,
      <rect key={`a${n}`} x={x + 9} y="7" width="1" height="1" fill="#27477a" />,
      <rect key={`b${n}`} x={x + 18} y="5" width="1" height="5" fill="#27477a" />,
      <rect key={`c${n}`} x={x + 27} y="7" width="1" height="1" fill="#27477a" />,
    );
  }
  return <svg width="909" height="15" viewBox="0 0 909 15">{marks}</svg>;
};

const VerticalTicks = () => {
  const marks = [];
  for (let n = -9; n <= 9; n++) {
    const y = 342 + n * 36;
    marks.push(
      <text key={`n${n}`} x="7.5" y={y + 4.5} textAnchor="middle" fontSize="13" fontFamily="Liberation Sans" fill="#27477a" transform={`rotate(-90 7.5 ${y})`}>{rulerLabels(n)}</text>,
      <rect key={`a${n}`} x="7" y={y + 9} width="1" height="1" fill="#27477a" />,
      <rect key={`b${n}`} x="5" y={y + 18} width="5" height="1" fill="#27477a" />,
      <rect key={`c${n}`} x="7" y={y + 27} width="1" height="1" fill="#27477a" />,
    );
  }
  return <svg width="15" height="681" viewBox="0 0 15 681">{marks}</svg>;
};

/* ---------- slide drawing ---------- */

const SlideDrawing = () => {
  const corners = [[369, 190], [514, 190], [369, 443], [514, 443]];
  const sides = [[442, 190], [369, 317], [514, 317], [442, 443]];
  return (
    <svg width="911" height="683" viewBox="0 0 911 683">
      <path d="M332 191H369L266 443H227Z" fill="#4f81bd" stroke="#385d8a" strokeWidth="2.6" />
      <path d="M475 191H514L410 443H370Z" fill="#4f81bd" stroke="#385d8a" strokeWidth="2.6" />
      <path d="M369 190H514V443H369Z" fill="none" stroke="#3f6d9b" strokeWidth="1.2" />
      <path d="M442 170V190" stroke="#7c97b5" strokeWidth="1.2" />
      <circle cx="442" cy="166" r="4.8" fill="#86d83f" stroke="#6a7b6a" />
      {corners.map(([x, y]) => <circle key={`${x}-${y}`} cx={x} cy={y} r="4.8" fill="#dbeef3" stroke="#7f8a90" />)}
      {sides.map(([x, y]) => <rect key={`${x}-${y}`} x={x - 3.5} y={y - 3.5} width="7" height="7" fill="#dcedf9" stroke="#8fa8c4" />)}
      <path d="M475 185L480 190L475 195L470 190Z" fill="#f7e84a" stroke="#b6a93c" />
    </svg>
  );
};

const ThumbDrawing = () => (
  <svg width="220" height="165" viewBox="0 0 220 165">
    <path d="M80 47H91L66 108H55Z" fill="#4f81bd" stroke="#446f9f" />
    <path d="M115 47H125L101 108H90Z" fill="#4f81bd" stroke="#446f9f" />
  </svg>
);

/* ---------- small icons ---------- */

const PptLogo = () => (
  <svg width="20" height="20" viewBox="0 0 20 20">
    <rect x="0.5" y="0.5" width="19" height="19" rx="1.5" fill="#f9d9c4" stroke="#b9512a" />
    <text x="10" y="15.5" textAnchor="middle" fontSize="15" fontWeight="700" fontFamily="Liberation Sans" fill="#d4561e">P</text>
  </svg>
);

const SaveIcon = () => (
  <svg width="16" height="16" viewBox="0 0 16 16">
    <path d="M1 1H13L15 3V15H1Z" fill="#4f62ae" stroke="#2f3c7e" />
    <rect x="4" y="1.5" width="8" height="5" fill="#e6ecf8" />
    <rect x="4" y="10" width="7" height="5" fill="#c2c9dd" />
  </svg>
);

const UndoIcon = () => (
  <svg width="16" height="16" viewBox="0 0 16 16">
    <path d="M2 2V8H8L6 6C8 4 11 5 11 8C11 10 10 12 8 14C12 13 15 11 14 7C13 2 7 1 4 4Z" fill="#3e7fd3" stroke="#2a5a9c" strokeWidth="0.5" />
  </svg>
);

const RedoIcon = () => (
  <svg width="16" height="16" viewBox="0 0 16 16">
    <path d="M4 3A6.2 6.2 0 1 0 12 3" fill="none" stroke="#3e7fd3" strokeWidth="2.6" />
    <path d="M2 0V6H7Z" fill="#3e7fd3" />
  </svg>
);

const TinyCaret = () => (
  <svg width="9" height="10" viewBox="0 0 9 10"><path d="M1 3.5H7L4 6.5Z" fill="#333" /></svg>
);

const CustomizeIcon = () => (
  <svg width="10" height="12" viewBox="0 0 10 12">
    <path d="M1 2.5H8" stroke="#333" />
    <path d="M1 5.5H8L4.5 9.5Z" fill="#333" />
  </svg>
);

const HelpIcon = () => (
  <svg width="17" height="17" viewBox="0 0 17 17">
    <circle cx="8.5" cy="8.5" r="8" fill="#4a7fd0" />
    <text x="8.5" y="13" textAnchor="middle" fontSize="13" fontWeight="700" fontFamily="Liberation Sans" fill="#fff">?</text>
  </svg>
);

const CollapseIcon = () => (
  <svg width="10" height="8" viewBox="0 0 10 8">
    <path d="M1 5L5 1L9 5L7 7L5 5L3 7Z" fill="none" stroke="#555" />
  </svg>
);

const Windows = () => (
  <svg width="20" height="20" viewBox="0 0 20 20" fill="#fff">
    <path d="M0 3L8.5 1.8V9.5H0ZM9.5 1.6L20 0V9.5H9.5ZM0 10.5H8.5V18.2L0 17ZM9.5 10.5H20V20L9.5 18.4Z" />
  </svg>
);

const TaskViewIcon = () => (
  <svg width="20" height="26" viewBox="0 0 20 26" fill="none" stroke="#fff" strokeWidth="1.2">
    <path d="M1 2H13M1 24H13M1 9H13V17H1ZM4 2V4M17 2V10M17 13V24" />
  </svg>
);

const WordIcon = () => (
  <svg width="28" height="28" viewBox="0 0 28 28">
    <path d="M3 2H24V26H3Z" fill="#f3f6fb" />
    <path d="M3 2H22V18L3 21Z" fill="#2b62bb" />
    <text x="12" y="17" textAnchor="middle" fontSize="16" fontWeight="700" fontFamily="Liberation Sans" fill="#fff">W</text>
    <path d="M6 22H22M6 24H22" stroke="#94b4e0" />
  </svg>
);

const PptTaskIcon = () => (
  <svg width="28" height="30" viewBox="0 0 28 30">
    <path d="M3 1H24V28H3Z" fill="#f9d7c0" stroke="#d0532a" />
    <path d="M3 1H24V14L3 18Z" fill="#ef8a4d" />
    <text x="10" y="16" textAnchor="middle" fontSize="17" fontWeight="700" fontFamily="Liberation Sans" fill="#fff">P</text>
    <circle cx="17" cy="17" r="5" fill="#fff" stroke="#d0532a" />
    <path d="M7 23H22M7 25H22" stroke="#e08a5c" />
  </svg>
);

const CheckIcon = () => (
  <svg width="22" height="22" viewBox="0 0 22 22">
    <path d="M2 12L9 7L20 13L12 20Z" fill="#dbe5f2" stroke="#4570ae" strokeWidth="1.5" />
    <path d="M7 11L10 15L18 2" fill="none" stroke="#2e62b8" strokeWidth="2.5" />
  </svg>
);

const GridIcon = ({ kind }: { kind: number }) => {
  const paths = [
    'M2 2H6V12H2ZM7 2H13V12H7Z',
    'M2 2H6.5V6.5H2ZM8 2H12.5V6.5H8ZM2 8H6.5V12.5H2ZM8 8H12.5V12.5H8Z',
    'M2 2H12V12H2ZM2 5H7V12M7 2V12M9 5H11M9 7H11M9 9H11',
    'M2 2H12V8H2ZM7 8V12M4 12H10M4 10H10',
  ];
  return (
    <svg width="15" height="15" viewBox="0 0 15 15">
      <path d={paths[kind]} fill={kind === 0 ? '#fff' : 'none'} stroke="#3e4f68" />
    </svg>
  );
};

const FitIcon = () => (
  <svg width="16" height="16" viewBox="0 0 16 16" fill="none" stroke="#3b4d68">
    <path d="M1 4V1H4M12 1H15V4M15 12V15H12M4 15H1V12M8 3V6M8 10V13M3 8H6M10 8H13" strokeDasharray="2 1" />
  </svg>
);

const TrayIcons = {
  chevron: (
    <svg width="18" height="10" viewBox="0 0 18 10"><path d="M1 9L9 1L17 9" fill="none" stroke="#fff" strokeWidth="1.2" /></svg>
  ),
  bell: (
    <svg width="20" height="20" viewBox="0 0 20 20" fill="#f2f2f2">
      <path d="M10 1Q15 2 15 8V13L18 16H2L5 13V8Q5 2 10 1Z" />
      <rect x="7.5" y="17" width="5" height="2" />
    </svg>
  ),
  green: (
    <svg width="21" height="21" viewBox="0 0 21 21">
      <circle cx="10.5" cy="10.5" r="10" fill="#d9c21c" />
      <path d="M2 6Q10 -1 18 5Q21 12 15 18Q6 21 2 14Z" fill="#4f9e1c" />
      <path d="M9 5H12V9H16V12H12V16H9V12H5V9H9Z" fill="#0a2a0a" />
    </svg>
  ),
  net: (
    <svg width="21" height="20" viewBox="0 0 21 20" fill="none" stroke="#fff">
      <path d="M4 2H20V14H4ZM12 14V18M7 18.5H17" />
      <rect x="1" y="1" width="4" height="5" fill="#090c11" />
    </svg>
  ),
  sound: (
    <svg width="22" height="20" viewBox="0 0 22 20" fill="none" stroke="#fff">
      <path d="M1 7H4L9 3V17L4 13H1Z" />
      <path d="M12 7Q14 10 12 13" />
      <path d="M15 5Q18 10 15 15" stroke="#9a9a9a" />
      <path d="M18 3Q22 10 18 17" stroke="#666" />
    </svg>
  ),
  sogou: (
    <svg width="20" height="20" viewBox="0 0 20 20">
      <path d="M3 3L18 0L20 16L5 19Z" fill="#ea4f23" />
      <text x="11" y="15" textAnchor="middle" fontSize="15" fontWeight="700" fontFamily="Liberation Sans" fill="#fff">S</text>
    </svg>
  ),
  notify: (
    <svg width="32" height="32" viewBox="0 0 32 32">
      <path d="M2 2H22V19H13L9 23V19H2Z" fill="#fff" />
      <path d="M5 7H19M5 11H19M5 15H15" stroke="#222" />
      <circle cx="21" cy="22" r="9" fill="#3b3b3b" stroke="#222" />
      <text x="21" y="27" textAnchor="middle" fontSize="14" fontWeight="700" fontFamily="Liberation Sans" fill="#fff">1</text>
    </svg>
  ),
};

const tabs = ['开始', '插入', '设计', '布尔运算', '切换', '动画', '幻灯片放映', '审阅', '视图'];

const App = () => (
  <Screen>
    <GlobalStyle />
    <svg width="0" height="0" style={{ position: 'absolute' }}>
      <defs>
        <linearGradient id="shapeFill" x1="0" y1="0" x2="0" y2="1">
          <stop offset="0" stopColor="#f5f9fd" />
          <stop offset="1" stopColor="#c2d7ea" />
        </linearGradient>
      </defs>
    </svg>

    <TitleBar>
      <QuickAccess>
        <PptLogo />
        <QuickSep />
        <SaveIcon />
        <QuickGap $w={10} />
        <UndoIcon />
        <TinyCaret />
        <QuickGap $w={7} />
        <RedoIcon />
        <QuickSep />
        <CustomizeIcon />
      </QuickAccess>
      <Title>演示文稿1  -  Microsoft PowerPoint</Title>
      <WinControls>
        <WinButton>
          <svg width="14" height="14" viewBox="0 0 14 14"><path d="M1 7H13" stroke="#111" /></svg>
        </WinButton>
        <WinButton>
          <svg width="14" height="14" viewBox="0 0 14 14" fill="none" stroke="#111"><path d="M1 3.5H10.5V13H1ZM3.5 3.5V1H13V10.5H10.5" /></svg>
        </WinButton>
        <WinButton>
          <svg width="14" height="14" viewBox="0 0 14 14"><path d="M1 1L13 13M13 1L1 13" stroke="#111" /></svg>
        </WinButton>
      </WinControls>
    </TitleBar>

    <TabRow>
      <FileTab>文件</FileTab>
      {tabs.map(t => <Tab key={t} $active={t === '插入'}>{t}</Tab>)}
      <ContextTab>
        <ContextHeader>绘图工具</ContextHeader>
        格式
      </ContextTab>
      <HelpArea>
        <CollapseIcon />
        <HelpIcon />
      </HelpArea>
    </TabRow>

    <Ribbon>
      {RIBBON_GROUPS.map((group, i) => (
        <Group key={i} $w={group.w} $pad={group.pad}>
          <GroupButtons>
            {group.items.map((item: any) => (
              <RibbonButton key={item.text} $w={item.w} $active={item.active} $disabled={item.disabled}>
                <RibbonIcon>
                  <svg width="33" height="34" viewBox="0 0 33 34">{RIBBON_ICONS[item.icon]}</svg>
                </RibbonIcon>
                <RibbonText>{item.text}</RibbonText>
                {item.caret && <Caret />}
              </RibbonButton>
            ))}
          </GroupButtons>
          <GroupLabel $pad={group.pad}>{group.label}</GroupLabel>
        </Group>
      ))}
    </Ribbon>

    <Workspace>
      <LeftPane>
        <PaneTabs>
          <PaneTab $active>幻灯片</PaneTab>
          <PaneTab>大纲</PaneTab>
          <PaneClose>
            <svg width="14" height="14" viewBox="0 0 14 14"><path d="M2 2L12 12M12 2L2 12" stroke="#55647a" strokeWidth="3" /></svg>
          </PaneClose>
        </PaneTabs>
        <SlideItem>
          <SlideNumber>1</SlideNumber>
          <Thumb><ThumbDrawing /></Thumb>
        </SlideItem>
      </LeftPane>
      <Sash />
      <RightColumn>
        <Stage>
          <RulerCorner />
          <HRuler><HorizontalTicks /></HRuler>
          <VRuler><VerticalTicks /></VRuler>
          <Slide><SlideDrawing /></Slide>
        </Stage>
        <Notes>
          <NotesText>单击此处添加备注</NotesText>
          <NotesScroll>
            <ArrowUp />
            <ArrowDown />
          </NotesScroll>
        </Notes>
      </RightColumn>
    </Workspace>

    <StatusBar>
      <StatusItem $w={175}>幻灯片 第 1 张，共 1 张</StatusItem>
      <StatusItem $w={126} $center>“Office 主题”</StatusItem>
      <StatusItem $w={125}>
        <CheckIcon />
        中文(中国)
      </StatusItem>
      <StatusRight>
        <ViewBtn $active><GridIcon kind={0} /></ViewBtn>
        <ViewBtn><GridIcon kind={1} /></ViewBtn>
        <ViewBtn><GridIcon kind={2} /></ViewBtn>
        <ViewBtn><GridIcon kind={3} /></ViewBtn>
        <ZoomLabel>76%</ZoomLabel>
        <ZoomCircle $ml={7}>−</ZoomCircle>
        <ZoomTrack><ZoomThumb /></ZoomTrack>
        <ZoomCircle $ml={0}>+</ZoomCircle>
        <FitBtn><FitIcon /></FitBtn>
      </StatusRight>
    </StatusBar>

    <Taskbar>
      <TaskIcon><Windows /></TaskIcon>
      <TaskIcon>
        <svg width="20" height="20" viewBox="0 0 20 20"><circle cx="10" cy="10" r="8" fill="none" stroke="#fff" strokeWidth="2.4" /></svg>
      </TaskIcon>
      <TaskIcon><TaskViewIcon /></TaskIcon>
      <TaskApp $first><WordIcon /></TaskApp>
      <TaskApp $active><PptTaskIcon /></TaskApp>
      <Tray>
        <TrayItem $w={30}>{TrayIcons.chevron}</TrayItem>
        <TrayItem $w={30}>{TrayIcons.bell}</TrayItem>
        <TrayItem $w={30}>{TrayIcons.green}</TrayItem>
        <TrayItem $w={30}>{TrayIcons.net}</TrayItem>
        <TrayItem $w={28}>{TrayIcons.sound}</TrayItem>
        <TrayItem $w={34}>中</TrayItem>
        <TrayItem $w={34}>{TrayIcons.sogou}</TrayItem>
        <Clock>14:27<br />2020/2/5 星期三</Clock>
        <TrayItem $w={64}>{TrayIcons.notify}</TrayItem>
      </Tray>
    </Taskbar>

    <Gallery>
      <GalleryList>
        {SECTIONS.map(section => (
          <div key={section.title}>
            <SectionTitle>{section.title}</SectionTitle>
            <ShapeGrid>
              {section.shapes.map((name, i) => (
                <ShapeCell key={i} $active={section.title === '基本形状' && i === 5}>
                  <ShapeIcon name={name} />
                </ShapeCell>
              ))}
            </ShapeGrid>
          </div>
        ))}
      </GalleryList>
      <GalleryScroll>
        <ScrollBtn><ArrowUp $c="#a3aeca" /></ScrollBtn>
        <ScrollBtn><ArrowDown $c="#8e9cc4" /></ScrollBtn>
      </GalleryScroll>
      <GalleryFooter>
        <svg width="10" height="10" viewBox="0 0 10 10" fill="#a9b4c2"><path d="M7 1h2v2H7zM4 4h2v2H4zM7 4h2v2H7zM1 7h2v2H1zM4 7h2v2H4zM7 7h2v2H7z" /></svg>
      </GalleryFooter>
      <Tooltip>平行四边形</Tooltip>
    </Gallery>

    <GreenBall>56</GreenBall>

    <ActivateText>
      激活 Windows
      <ActivateSub>转到“设置”以激活 Windows。</ActivateSub>
    </ActivateText>

    <Watermark>
      <Paw width="92" height="46" viewBox="0 0 92 46" fill="rgba(255,255,255,0.72)">
        <ellipse cx="15" cy="32" rx="9" ry="13" />
        <ellipse cx="37" cy="18" rx="10" ry="17" />
        <ellipse cx="60" cy="16" rx="9" ry="15" />
        <ellipse cx="78" cy="34" rx="9" ry="12" />
      </Paw>
      <BaiduLine>Baidu<BaiduCjk>经验</BaiduCjk></BaiduLine>
      <JingyanLine>jingyan.baidu.com</JingyanLine>
    </Watermark>
  </Screen>
);

export default App;
